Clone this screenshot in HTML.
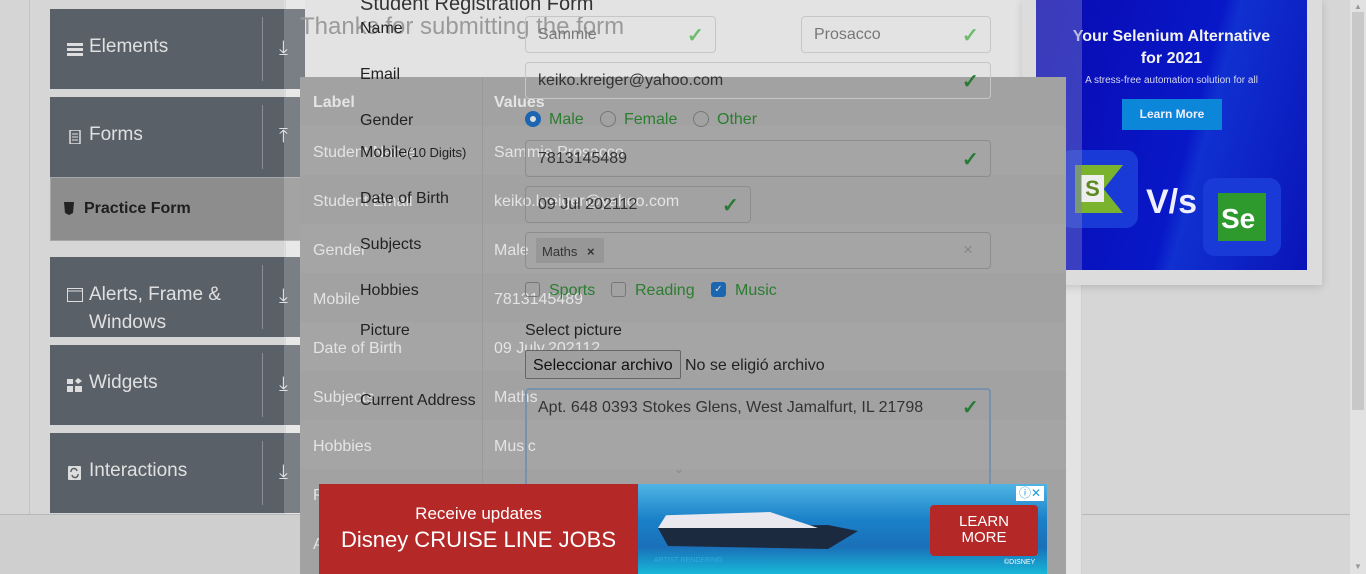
<!DOCTYPE html>
<html><head><meta charset="utf-8"><style>
*{box-sizing:border-box;margin:0;padding:0}
html,body{width:1366px;height:574px;overflow:hidden}
body{position:relative;background:#d6d6d6;font-family:"Liberation Sans",sans-serif}
.a{position:absolute}
.card{position:absolute;left:50px;width:255px;height:80px;background:#596067;color:#e0e0e0;font-size:19px}
.card .t{position:absolute;left:39px;top:27px}
.card .dv{position:absolute;left:212px;top:8px;width:1px;height:64px;background:#8a8f95}
.card .ar{position:absolute;left:229px;top:28px;font-size:20px;color:#ddd}
.card .ic{position:absolute;left:17px;top:33px;width:16px;height:14px}
.lbl{position:absolute;left:360px;font-size:16px;color:#222;margin-top:1px}
.inp{position:absolute;border:1px solid #8d8d8d;border-radius:4px}
.inp.l{border-color:#c6c6c6}
.ck{position:absolute;color:#2a7a36;font-size:20px;font-weight:bold}
.tv{position:absolute;font-size:16px;color:#e4e4e4;margin-top:1px}
.g{color:#2b7d30}
</style></head><body>
<div class="a" style="left:0;top:0;width:30px;height:514px;background:#d5d5d5;border-right:1px solid #c4c4c4"></div>
<div class="a" style="left:31px;top:0;width:254px;height:514px;background:#d6d6d6"></div>
<div class="a" style="left:285px;top:0;width:797px;height:574px;background:#e3e3e3;border-left:1px solid #d0d0d0;border-right:1px solid #cfcfcf"></div>
<div class="a" style="left:0;top:514px;width:300px;height:60px;background:#cfcfcf;border-top:1px solid #b8b8b8"></div>
<div class="a" style="left:1082px;top:514px;width:268px;height:1px;background:#b8b8b8"></div>
<div class="a" style="left:1350px;top:0;width:16px;height:574px;background:#e2e2e2"></div>
<div class="a" style="left:1352px;top:12px;width:12px;height:398px;background:#c8c8c8"></div>
<div class="a" style="left:1354px;top:2px;font-size:8px;color:#999">▲</div>
<div class="a" style="left:1354px;top:562px;font-size:8px;color:#999">▼</div>

<div class="card" style="top:9px"><svg class="ic" viewBox="0 0 16 14"><rect y="1" width="16" height="3" fill="#ddd"/><rect y="6" width="16" height="3" fill="#ddd"/><rect y="11" width="16" height="3" fill="#ddd"/></svg><span class="t">Elements</span><div class="dv"></div><span class="ar">⤓</span></div>
<div class="card" style="top:97px"><svg class="ic" viewBox="0 0 16 14"><rect x="3" y="0" width="10" height="14" rx="1" fill="none" stroke="#ddd" stroke-width="1.5"/><path d="M5 4h6M5 7h6M5 10h6" stroke="#ddd"/></svg><span class="t">Forms</span><div class="dv"></div><span class="ar">⤒</span></div>
<div class="a" style="left:50px;top:177px;width:255px;height:64px;background:#8d8d8d;border:1px solid #a6a6a6"></div>
<div class="a" style="left:64px;top:202px;width:10px;height:13px;background:#222;clip-path:polygon(0 0,100% 0,90% 85%,50% 100%,10% 85%)"></div>
<div class="a" style="left:84px;top:200px;font-size:16px;font-weight:bold;color:#1e1e1e">Practice Form</div>
<div class="card" style="top:257px"><svg class="ic" viewBox="0 0 16 14" style="top:31px"><rect x="0.5" y="0.5" width="15" height="13" fill="none" stroke="#ddd"/><path d="M0 3h16" stroke="#ddd"/></svg><span class="t" style="top:24px;line-height:28px">Alerts, Frame &amp;<br>Windows</span><div class="dv"></div><span class="ar">⤓</span></div>
<div class="card" style="top:345px"><svg class="ic" viewBox="0 0 16 14"><rect x="0" y="1" width="6" height="5" fill="#ddd"/><rect x="0" y="8" width="6" height="6" fill="#ddd"/><rect x="8" y="8" width="7" height="6" fill="#ddd"/><path d="M11 0l4 3-4 3-3-3z" fill="#ddd"/></svg><span class="t">Widgets</span><div class="dv"></div><span class="ar">⤓</span></div>
<div class="card" style="top:433px"><svg class="ic" viewBox="0 0 16 14"><rect x="1" y="0" width="13" height="14" rx="1" fill="#ddd"/><path d="M4 6a3 3 0 0 1 6-1M11 8a3 3 0 0 1-6 1" stroke="#596067" fill="none" stroke-width="1.5"/></svg><span class="t">Interactions</span><div class="dv"></div><span class="ar">⤓</span></div>
<div class="a" style="left:284px;top:0;width:21px;height:514px;background:rgba(255,255,255,0.2)"></div>

<div class="a" style="left:1022px;top:0;width:300px;height:285px;background:#dcdcdc;box-shadow:0 2px 8px rgba(0,0,0,.15)"></div>
<div class="a" style="left:1036px;top:0;width:271px;height:270px;background:linear-gradient(105deg,#0a0ab0 0%,#0818c8 55%,#1030d0 60%,#0a14b8 100%);overflow:hidden">
 <div class="a" style="left:0;top:26px;width:271px;text-align:center;color:#f2f2f2;font-weight:bold;font-size:16px;line-height:22px">Your Selenium Alternative<br>for 2021</div>
 <div class="a" style="left:0;top:75px;width:271px;text-align:center;color:#d8d8f0;font-size:10px">A stress-free automation solution for all</div>
 <div class="a" style="left:86px;top:99px;width:100px;height:31px;background:#0b86d8;color:#eef;font-size:12px;font-weight:bold;text-align:center;line-height:31px">Learn More</div>
 <div class="a" style="left:24px;top:150px;width:78px;height:78px;background:#1a3ad8;border-radius:12px"></div>
 <div class="a" style="left:39px;top:165px;width:48px;height:48px;background:#7ab32e;clip-path:polygon(0 0,100% 0,60% 50%,100% 100%,0 100%)"></div>
 <div class="a" style="left:45px;top:175px;width:23px;height:27px;background:#eee;color:#5a8a20;font-weight:bold;font-size:22px;text-align:center;line-height:27px">S</div>
 <div class="a" style="left:110px;top:183px;color:#eef;font-size:34px;font-weight:bold">V/s</div>
 <div class="a" style="left:167px;top:178px;width:78px;height:78px;background:#1a3ad8;border-radius:12px"></div>
 <div class="a" style="left:182px;top:193px;width:48px;height:48px;background:#2e9a2e;color:#fff;font-weight:bold;font-size:28px;padding:10px 0 0 3px">Se</div>
</div>
<div class="a" style="left:1036px;top:0;width:46px;height:270px;background:rgba(120,120,200,0.45)"></div>

<div class="a" style="left:300px;top:77px;width:766px;height:497px;background:#a2a2a2"></div>
<div class="a" style="left:300px;top:126px;width:766px;height:49px;background:#a5a5a5"></div>
<div class="a" style="left:300px;top:224px;width:766px;height:49px;background:#a5a5a5"></div>
<div class="a" style="left:300px;top:322px;width:766px;height:49px;background:#a5a5a5"></div>
<div class="a" style="left:300px;top:420px;width:766px;height:49px;background:#a5a5a5"></div>
<div class="a" style="left:482px;top:77px;width:1px;height:497px;background:#9a9a9a"></div>
<div class="tv" style="left:313px;top:93px;font-weight:bold">Label</div>
<div class="tv" style="left:494px;top:93px;font-weight:bold">Values</div>
<div class="tv" style="left:313px;top:143px">Student Name</div><div class="tv" style="left:494px;top:143px">Sammie Prosacco</div>
<div class="tv" style="left:313px;top:192px">Student Email</div><div class="tv" style="left:494px;top:192px">keiko.kreiger@yahoo.com</div>
<div class="tv" style="left:313px;top:241px">Gender</div><div class="tv" style="left:494px;top:241px">Male</div>
<div class="tv" style="left:313px;top:290px">Mobile</div><div class="tv" style="left:494px;top:290px">7813145489</div>
<div class="tv" style="left:313px;top:339px">Date of Birth</div><div class="tv" style="left:494px;top:339px">09 July,202112</div>
<div class="tv" style="left:313px;top:388px">Subjects</div><div class="tv" style="left:494px;top:388px">Maths</div>
<div class="tv" style="left:313px;top:437px">Hobbies</div><div class="tv" style="left:494px;top:437px">Music</div>
<div class="tv" style="left:313px;top:486px">Picture</div>
<div class="tv" style="left:313px;top:535px">Address</div>

<div class="a" style="left:360px;top:-7px;font-size:20px;color:#333">Student Registration Form</div>
<div class="a" style="left:300px;top:13px;font-size:24px;color:#9a9a9a">Thanks for submitting the form</div>
<div class="lbl" style="top:19px">Name</div>
<div class="inp l" style="left:525px;top:16px;width:191px;height:37px"></div><div class="a" style="left:538px;top:26px;font-size:16px;color:#777">Sammie</div><div class="ck" style="left:687px;top:23px;color:#6dbd6d">✓</div>
<div class="inp l" style="left:801px;top:16px;width:190px;height:37px"></div><div class="a" style="left:814px;top:26px;font-size:16px;color:#777">Prosacco</div><div class="ck" style="left:962px;top:23px;color:#6dbd6d">✓</div>
<div class="lbl" style="top:65px">Email</div>
<div class="inp l" style="left:525px;top:62px;width:466px;height:37px"></div><div class="a" style="left:538px;top:72px;font-size:16px;color:#333">keiko.kreiger@yahoo.com</div><div class="ck" style="left:962px;top:69px">✓</div>
<div class="lbl" style="top:111px">Gender</div>
<div class="a" style="left:525px;top:111px;width:16px;height:16px;border-radius:50%;border:5px solid #1a66b0;background:#ddd"></div><div class="a g" style="left:549px;top:111px;font-size:16px">Male</div>
<div class="a" style="left:600px;top:111px;width:16px;height:16px;border-radius:50%;border:1px solid #777"></div><div class="a g" style="left:624px;top:111px;font-size:16px">Female</div>
<div class="a" style="left:693px;top:111px;width:16px;height:16px;border-radius:50%;border:1px solid #777"></div><div class="a g" style="left:717px;top:111px;font-size:16px">Other</div>
<div class="lbl" style="top:143px">Mobile<span style="font-size:13px">(10 Digits)</span></div>
<div class="inp" style="left:525px;top:140px;width:466px;height:37px"></div><div class="a" style="left:538px;top:150px;font-size:16px;color:#333">7813145489</div><div class="ck" style="left:962px;top:147px">✓</div>
<div class="lbl" style="top:189px">Date of Birth</div>
<div class="inp" style="left:525px;top:186px;width:226px;height:37px"></div><div class="a" style="left:538px;top:196px;font-size:16px;color:#333">09 Jul 202112</div><div class="ck" style="left:722px;top:193px">✓</div>
<div class="lbl" style="top:235px">Subjects</div>
<div class="inp" style="left:525px;top:232px;width:466px;height:37px"></div>
<div class="a" style="left:536px;top:238px;width:68px;height:25px;background:#979797;border-radius:2px;font-size:13px;color:#333;padding:6px 0 0 6px">Maths <b style="margin-left:6px">×</b></div>
<div class="a" style="left:963px;top:240px;font-size:17px;color:#888">×</div>
<div class="lbl" style="top:281px">Hobbies</div>
<div class="a" style="left:525px;top:282px;width:15px;height:15px;border:1px solid #777;border-radius:3px"></div><div class="a g" style="left:549px;top:282px;font-size:16px">Sports</div>
<div class="a" style="left:611px;top:282px;width:15px;height:15px;border:1px solid #777;border-radius:3px"></div><div class="a g" style="left:635px;top:282px;font-size:16px">Reading</div>
<div class="a" style="left:711px;top:282px;width:15px;height:15px;background:#1a66b0;border-radius:3px;color:#ddd;font-size:10px;text-align:center;line-height:15px">✓</div><div class="a g" style="left:735px;top:282px;font-size:16px">Music</div>
<div class="lbl" style="top:321px">Picture</div>
<div class="a" style="left:525px;top:322px;font-size:16px;color:#222">Select picture</div>
<div class="a" style="left:525px;top:350px;width:156px;height:29px;border:1px solid #666;border-radius:2px;background:#a0a0a0;font-size:16px;color:#111;padding:6px 0 0 7px">Seleccionar archivo</div>
<div class="a" style="left:685px;top:357px;font-size:16px;color:#222">No se eligió archivo</div>
<div class="lbl" style="top:391px">Current Address</div>
<div class="inp" style="left:525px;top:388px;width:466px;height:140px;border:2px solid #7891ad"></div>
<div class="a" style="left:538px;top:399px;font-size:16px;color:#333">Apt. 648 0393 Stokes Glens, West Jamalfurt, IL 21798</div><div class="ck" style="left:962px;top:395px">✓</div>
<div class="a" style="left:674px;top:462px;font-size:12px;color:#888">⌄</div>

<div class="a" style="left:319px;top:484px;width:319px;height:90px;background:#b52828;color:#fff;text-align:center;white-space:nowrap;overflow:hidden">
 <div style="margin-top:20px;font-size:17px">Receive updates</div>
 <div style="margin-top:3px;font-size:22px;font-family:'Liberation Sans Narrow','Liberation Sans',sans-serif">Disney CRUISE LINE JOBS</div>
</div>
<div class="a" style="left:638px;top:484px;width:409px;height:90px;background:linear-gradient(180deg,#4fb4e4 0%,#1a80c8 40%,#1a70b8 70%,#18b8d8 100%);overflow:hidden">
 <div class="a" style="left:20px;top:35px;width:200px;height:30px;background:#1c2a40;clip-path:polygon(0 30%,85% 20%,100% 40%,85% 100%,5% 90%)"></div>
 <div class="a" style="left:20px;top:28px;width:160px;height:16px;background:#e8e8ee;clip-path:polygon(0 100%,5% 20%,70% 0,100% 100%)"></div>
 <div class="a" style="left:292px;top:21px;width:108px;height:51px;background:#b52828;border-radius:4px;color:#fff;font-size:15px;text-align:center;line-height:16px;padding-top:9px">LEARN<br>MORE</div>
 <div class="a" style="left:378px;top:2px;width:28px;height:15px;background:#fff;color:#1a9ad8;font-size:12px;line-height:15px;text-align:center">ⓘ✕</div>
 <div class="a" style="left:16px;top:73px;font-size:7px;color:#3ad">ARTIST RENDERING</div>
 <div class="a" style="left:366px;top:75px;font-size:7px;color:#fff">©DISNEY</div>
</div>
</body></html>
